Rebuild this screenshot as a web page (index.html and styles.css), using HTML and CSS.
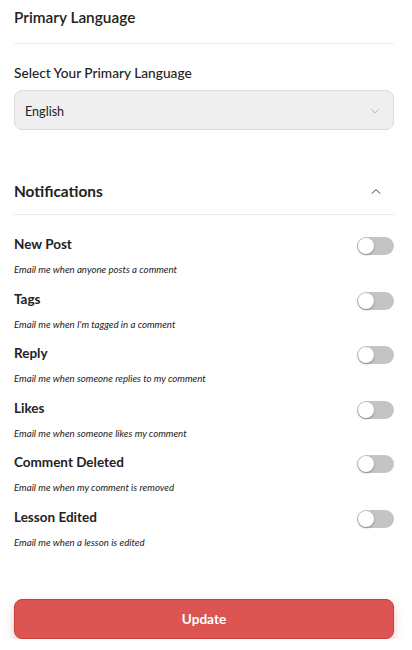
FILE: index.html
```html
<!DOCTYPE html>
<html>
<head>
<meta charset="utf-8">
<link rel="stylesheet" href="styles.css">
</head>
<body>
<div class="page">
  <div class="section-head">Primary Language</div>
  <div class="field-label">Select Your Primary Language</div>
  <div class="select">
    <span class="select-value">English</span>
    <svg class="select-chev" width="10" height="6" viewBox="0 0 10 6"><path d="M1 1 L5 5 L9 1" fill="none" stroke="#bbb" stroke-width="1"/></svg>
  </div>

  <div class="section-head notif-head">
    <span>Notifications</span>
    <svg class="up-chev" width="10" height="6" viewBox="0 0 10 6"><path d="M1 5.5 L5 1.5 L9 5.5" fill="none" stroke="#333" stroke-width="1"/></svg>
  </div>

  <div class="rows">
    <div class="row"><div class="row-top"><span class="row-title">New Post</span><span class="toggle"></span></div><div class="row-desc">Email me when anyone posts a comment</div></div>
    <div class="row"><div class="row-top"><span class="row-title">Tags</span><span class="toggle"></span></div><div class="row-desc">Email me when I'm tagged in a comment</div></div>
    <div class="row"><div class="row-top"><span class="row-title">Reply</span><span class="toggle"></span></div><div class="row-desc">Email me when someone replies to my comment</div></div>
    <div class="row"><div class="row-top"><span class="row-title">Likes</span><span class="toggle"></span></div><div class="row-desc">Email me when someone likes my comment</div></div>
    <div class="row"><div class="row-top"><span class="row-title">Comment Deleted</span><span class="toggle"></span></div><div class="row-desc">Email me when my comment is removed</div></div>
    <div class="row"><div class="row-top"><span class="row-title">Lesson Edited</span><span class="toggle"></span></div><div class="row-desc">Email me when a lesson is edited</div></div>
  </div>

  <button class="update">Update</button>
</div>
</body>
</html>
```

FILE: styles.css
```css
html, body {
  margin: 0;
  padding: 0;
  background: #fff;
}
body {
  font-family: Lato, "Liberation Sans", sans-serif;
  color: #222;
}
.page {
  padding: 0 18px 0 14px;
}
.section-head {
  font-size: 15.4px;
  line-height: 20px;
  font-weight: 600;
  padding-top: 7px;
  padding-bottom: 16px;
  border-bottom: 1px solid #ececec;
}
.field-label {
  margin-top: 20px;
  font-size: 13.7px;
  line-height: 18px;
  font-weight: 500;
}
.select {
  margin-top: 8px;
  height: 38px;
  box-sizing: content-box;
  border: 1px solid #dcdcdc;
  border-radius: 8px;
  background: #efefef;
  display: flex;
  align-items: center;
  justify-content: space-between;
  padding: 0 13px 0 10px;
  font-size: 12.6px;
}
.select-value {
  margin-top: 3px;
}
.select-chev {
  margin-top: 1px;
}
.notif-head {
  margin-top: 51px;
  padding-top: 0;
  padding-bottom: 13px;
  display: flex;
  justify-content: space-between;
  align-items: center;
  font-weight: 700;
}
.up-chev {
  margin-right: 13px;
}
.rows {
  padding-top: 20px;
  display: flex;
  flex-direction: column;
  gap: 13.6px;
}
.row-top {
  display: flex;
  justify-content: space-between;
  align-items: center;
  height: 18px;
}
.row-title {
  font-size: 13.5px;
  line-height: 18px;
  font-weight: 700;
}
.toggle {
  width: 37px;
  height: 18px;
  border-radius: 9px;
  background: #c4c4c4;
  margin-top: 4px;
  display: flex;
  align-items: center;
  padding: 0 1px;
  box-sizing: border-box;
}
.toggle::before {
  content: "";
  width: 16px;
  height: 16px;
  border-radius: 50%;
  background: #fff;
  box-shadow: 0 1px 2px rgba(0,0,0,0.35);
}
.row-desc {
  margin-top: 9px;
  font-size: 9.7px;
  line-height: 14px;
  font-style: italic;
}
.update {
  display: block;
  width: 100%;
  margin-top: 50px;
  height: 40px;
  padding: 0;
  border: 1px solid #c8403b;
  border-radius: 8px;
  background: #dc5552;
  color: #fff;
  font-family: Lato, "Liberation Sans", sans-serif;
  font-size: 13.6px;
  font-weight: 700;
  box-shadow: 0 4px 10px rgba(220, 85, 82, 0.35);
}
```
